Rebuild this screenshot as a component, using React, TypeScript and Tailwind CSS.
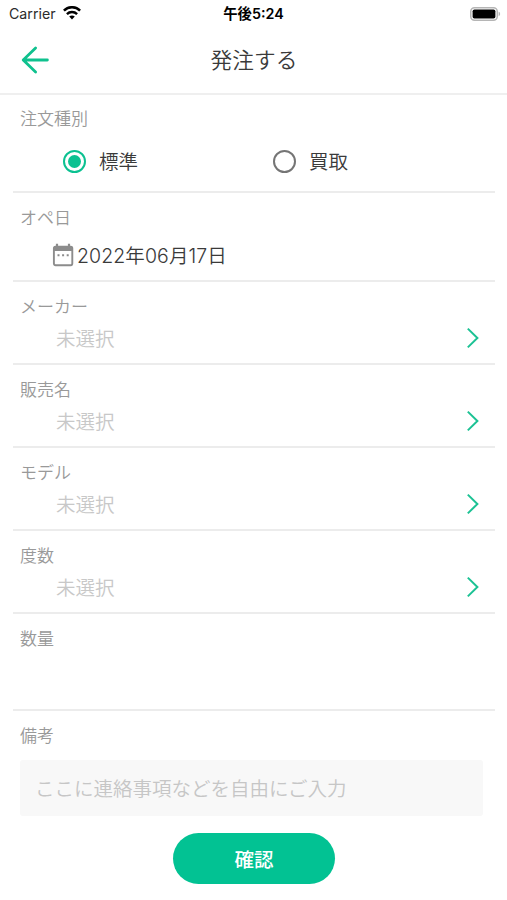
import type { ReactNode } from "react";
import { clsx } from "clsx";

const selects = [
  { label: "メーカー", value: "未選択" },
  { label: "販売名", value: "未選択" },
  { label: "モデル", value: "未選択" },
  { label: "度数", value: "未選択" },
];

function WifiIcon() {
  return (
    <svg width="18" height="14" viewBox="0 0 18 14" fill="none" stroke="#000" strokeWidth="2.5">
      <path d="M0.9 4.6C5.4 0.1 12.6 0.1 17.1 4.6" />
      <path d="M3.9 8.1C6.8 5.4 11.2 5.4 14.1 8.1" />
      <path d="M9 13.4L6.2 10.6C7.8 9.2 10.2 9.2 11.8 10.6Z" fill="#000" stroke="none" />
    </svg>
  );
}

function BatteryIcon() {
  return (
    <svg width="31" height="14" viewBox="0 0 31 14">
      <rect x="0.75" y="0.75" width="26.5" height="12.5" rx="3.8" fill="#fff" stroke="#b5b5b5" strokeWidth="1.5" />
      <rect x="2.6" y="2.5" width="22.8" height="9" rx="1.8" fill="#000" />
      <path d="M28.6 4.8C30.6 5.4 30.6 8.6 28.6 9.2Z" fill="#b5b5b5" />
    </svg>
  );
}

function BackArrow() {
  return (
    <svg width="28" height="28" viewBox="0 0 28 28" fill="none" stroke="#0fc18e" strokeWidth="2.8" strokeLinecap="round" strokeLinejoin="round">
      <path d="M14.6 2L2.2 14L14.6 26M2.4 14H26.4" />
    </svg>
  );
}

function CalendarIcon() {
  return (
    <svg width="22" height="24" viewBox="0 0 22 24">
      <path d="M5 0.8V5M17 0.8V5" stroke="#8c8c8c" strokeWidth="2.2" />
      <rect x="1.9" y="3.6" width="18.4" height="18.6" rx="1.6" fill="#fff" stroke="#8c8c8c" strokeWidth="1.9" />
      <path d="M2 3.4H20.2V8H2Z" fill="#8c8c8c" />
      <path d="M5.5 12.3H7.5M10.1 12.3H12.1M14.7 12.3H16.7" stroke="#8c8c8c" strokeWidth="2" />
    </svg>
  );
}

function Chevron() {
  return (
    <svg width="14" height="22" viewBox="0 0 14 22" fill="none" stroke="#1cc294" strokeWidth="2">
      <path d="M1.8 1.6L11.4 11L1.8 20.4" />
    </svg>
  );
}

function Section({ label, className, children }: { label: string; className?: string; children?: ReactNode }) {
  return (
    <section className={clsx("ml-[13px] mr-3 pl-[7px]", className)}>
      <h2 className="text-[17px] leading-[22px] text-[#999999]">{label}</h2>
      {children}
    </section>
  );
}

function Radio({ label, checked }: { label: string; checked?: boolean }) {
  return (
    <div className="flex w-[210px] items-center gap-[13px]">
      <span
        className={clsx(
          "flex size-[23px] items-center justify-center rounded-full",
          checked ? "border-[2.5px] border-[#0bc191]" : "border-[2.5px] border-[#757575]"
        )}
      >
        {checked && <span className="size-[13px] rounded-full bg-[#0bc191]" />}
      </span>
      <span className="pt-[3px]">{label}</span>
    </div>
  );
}

export default function App() {
  return (
    <div className="flex h-[900px] w-[507px] flex-col overflow-hidden bg-white font-['Inter','Noto_Sans_CJK_JP',sans-serif] text-[19.5px] font-[350] text-[#3a3a3a]">
      <div className="grid h-[27px] grid-cols-3 items-center pl-[9px] pr-[6px] text-black">
        <div className="flex items-center gap-[7px]">
          <span className="text-[14.2px] font-normal text-[#2b2b2b]">Carrier</span>
          <WifiIcon />
        </div>
        <div className="pr-[3px] text-center text-[14.3px] font-semibold">午後5:24</div>
        <div className="flex justify-end">
          <BatteryIcon />
        </div>
      </div>

      <header className="grid h-[68px] grid-cols-[1fr_auto_1fr] items-center border-b-2 border-[#efefef] pl-[21px] pr-5">
        <BackArrow />
        <h1 className="pt-px text-[21.7px]">発注する</h1>
      </header>

      <Section label="注文種別" className="h-[98px] border-b-2 border-[#ececec] pt-[13px]">
        <div className="mt-4 flex h-[30px] items-center pl-[43px]">
          <Radio label="標準" checked />
          <Radio label="買取" />
        </div>
      </Section>

      <Section label="オペ日" className="h-[89px] border-b-2 border-[#ececec] pt-[14px]">
        <div className="mt-[11px] flex h-[30px] items-center gap-[3px] pl-8">
          <CalendarIcon />
          <span className="pt-[3px] tracking-[0.1px]">2022年06月17日</span>
        </div>
      </Section>

      {selects.map(s => (
        <Section key={s.label} label={s.label} className="h-[83px] border-b-2 border-[#ececec] pt-[14px]">
          <div className="mt-[5px] flex h-[30px] items-center justify-between pl-9 pr-[15px]">
            <span className="pt-[3px] text-[#c8c8c8]">{s.value}</span>
            <Chevron />
          </div>
        </Section>
      ))}

      <Section label="数量" className="h-[97px] border-b-2 border-[#ececec] pt-[14px]" />

      <Section label="備考" className="pt-[14px]">
        <div className="mr-3 mt-[13px] flex h-14 items-center rounded-[3px] bg-[#f8f8f8] pl-[15px] pt-[3px] text-[#c6c6c6]">
          ここに連絡事項などを自由にご入力
        </div>
      </Section>

      <button className="ml-[173px] mt-[17px] h-[51px] w-[162px] rounded-full bg-[#02c293] pt-1 font-medium text-white">
        確認
      </button>
    </div>
  );
}
